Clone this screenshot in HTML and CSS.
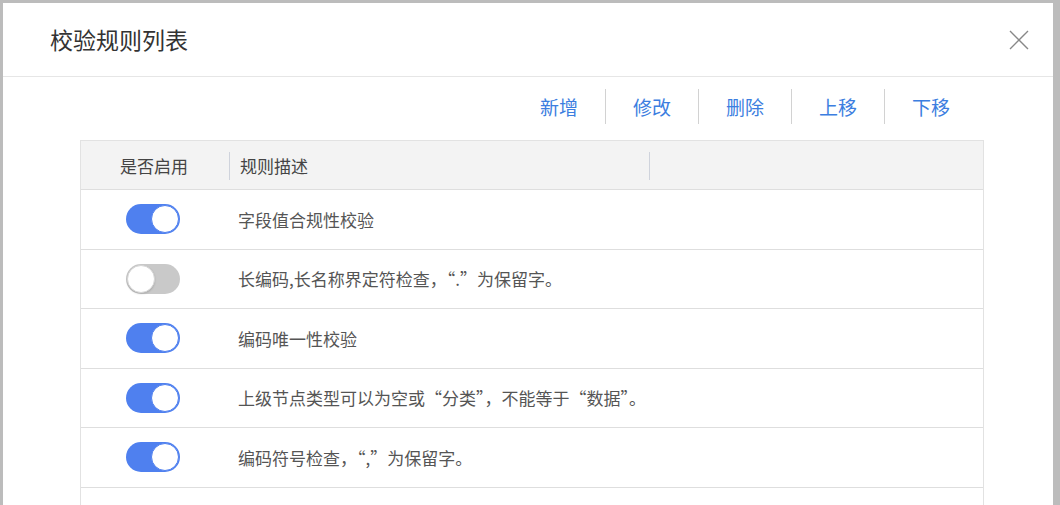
FILE: index.html
```html
<!doctype html>
<html lang="zh-CN">
  <head>
    <meta charset="UTF-8">
    <title>校验规则列表</title>
    <link rel="stylesheet" href="styles.css">
  </head>
  <body>
    <div class="dialog">
      <div class="dialog-header">
        <span class="dialog-title">校验规则列表</span>
        <button class="close-btn" title="关闭">
          <svg viewBox="0 0 20 20" width="20" height="20">
            <path d="M1 1L19 19M19 1L1 19" stroke="#888" stroke-width="1.4" fill="none"/>
          </svg>
        </button>
      </div>
      <div class="dialog-body">
        <div class="toolbar">
          <a class="tool-link">新增</a>
          <a class="tool-link">修改</a>
          <a class="tool-link">删除</a>
          <a class="tool-link">上移</a>
          <a class="tool-link">下移</a>
        </div>
        <div class="rule-table">
          <div class="rule-row rule-head">
            <div class="cell cell-switch">是否启用</div>
            <div class="cell cell-desc">规则描述</div>
            <div class="cell cell-rest"></div>
          </div>
          <div class="rule-row">
            <div class="cell cell-switch"><span class="switch on"></span></div>
            <div class="cell cell-desc">字段值合规性校验</div>
          </div>
          <div class="rule-row">
            <div class="cell cell-switch"><span class="switch"></span></div>
            <div class="cell cell-desc">长编码,长名称界定符检查，“.”为保留字。</div>
          </div>
          <div class="rule-row">
            <div class="cell cell-switch"><span class="switch on"></span></div>
            <div class="cell cell-desc">编码唯一性校验</div>
          </div>
          <div class="rule-row">
            <div class="cell cell-switch"><span class="switch on"></span></div>
            <div class="cell cell-desc">上级节点类型可以为空或“分类”，不能等于“数据”。</div>
          </div>
          <div class="rule-row">
            <div class="cell cell-switch"><span class="switch on"></span></div>
            <div class="cell cell-desc">编码符号检查，“,”为保留字。</div>
          </div>
          <div class="rule-row">
            <div class="cell cell-switch"></div>
            <div class="cell cell-desc"></div>
          </div>
        </div>
      </div>
    </div>
  </body>
</html>
```
FILE: styles.css
```css
body {
  margin: 0;
  background: #bcbcbc;
  font-family: "Noto Sans CJK SC", "Noto Sans", sans-serif;
  height: 505px;
  overflow: hidden;
}
/* Dialog frame */
.dialog {
  margin: 3px 0 0 3px;
  width: 1050px;
  height: 502px;
  background: #fff;
  overflow: hidden;
}
.dialog-header {
  display: flex;
  align-items: center;
  justify-content: space-between;
  height: 73px;
  padding: 0 24px 0 47px;
  border-bottom: 1px solid #e6e6e6;
}
.dialog-title {
  font-size: 23px;
  color: #333;
  margin-top: -1px;
}
.close-btn {
  background: none;
  border: none;
  padding: 0;
  width: 20px;
  height: 20px;
  cursor: pointer;
}
.close-btn svg {
  display: block;
}
/* Toolbar links */
.toolbar {
  display: flex;
  justify-content: flex-end;
  align-items: center;
  padding: 12px 103px 0 0;
  height: 36px;
}
.tool-link {
  font-size: 19px;
  color: #3c7ee0;
  padding: 0 27px;
  line-height: 35px;
  margin-top: -2px;
  cursor: pointer;
}
.tool-link + .tool-link {
  border-left: 1px solid #d2d2d2;
}
.tool-link:last-child {
  padding-right: 0;
}
/* Rules table */
.rule-table {
  margin: 15px 0 0 77px;
  width: 902px;
  border-left: 1px solid #e2e2e2;
  border-right: 1px solid #e2e2e2;
}
.rule-row {
  display: grid;
  grid-template-columns: 148px 420px 1fr;
  align-items: center;
  height: 58.5px;
  border-bottom: 1px solid #dedede;
  color: #555;
  font-size: 17px;
}
.rule-head {
  height: 48px;
  background: #f3f3f3;
  border-top: 1px solid #e2e2e2;
  color: #444;
}
.cell {
  display: flex;
  align-items: center;
  height: 100%;
  position: relative;
}
.cell-switch {
  justify-content: center;
  padding-right: 4px;
}
.rule-head .cell-switch {
  padding-right: 2px;
}
.cell-desc {
  padding-left: 9px;
}
.rule-head .cell-desc {
  padding-left: 11px;
}
.rule-head .cell-desc::before,
.rule-head .cell-rest::before {
  content: "";
  position: absolute;
  left: 0;
  top: 11px;
  bottom: 9px;
  border-left: 1px solid #cfd3dc;
}
/* Toggle switch */
.switch {
  position: relative;
  display: inline-block;
  width: 54px;
  height: 30px;
  border-radius: 15px;
  background: #c9c9c9;
}
.switch::after {
  content: "";
  position: absolute;
  top: 1px;
  left: 1px;
  width: 26px;
  height: 26px;
  border-radius: 50%;
  background: #fff;
  border: 1px solid #d6d6d6;
  box-shadow: 0 1px 2px rgba(0,0,0,0.15);
}
.switch.on {
  background: #4f80ef;
}
.switch.on::after {
  left: auto;
  right: 1px;
  border-color: #4f80ef;
  box-shadow: none;
}
```
